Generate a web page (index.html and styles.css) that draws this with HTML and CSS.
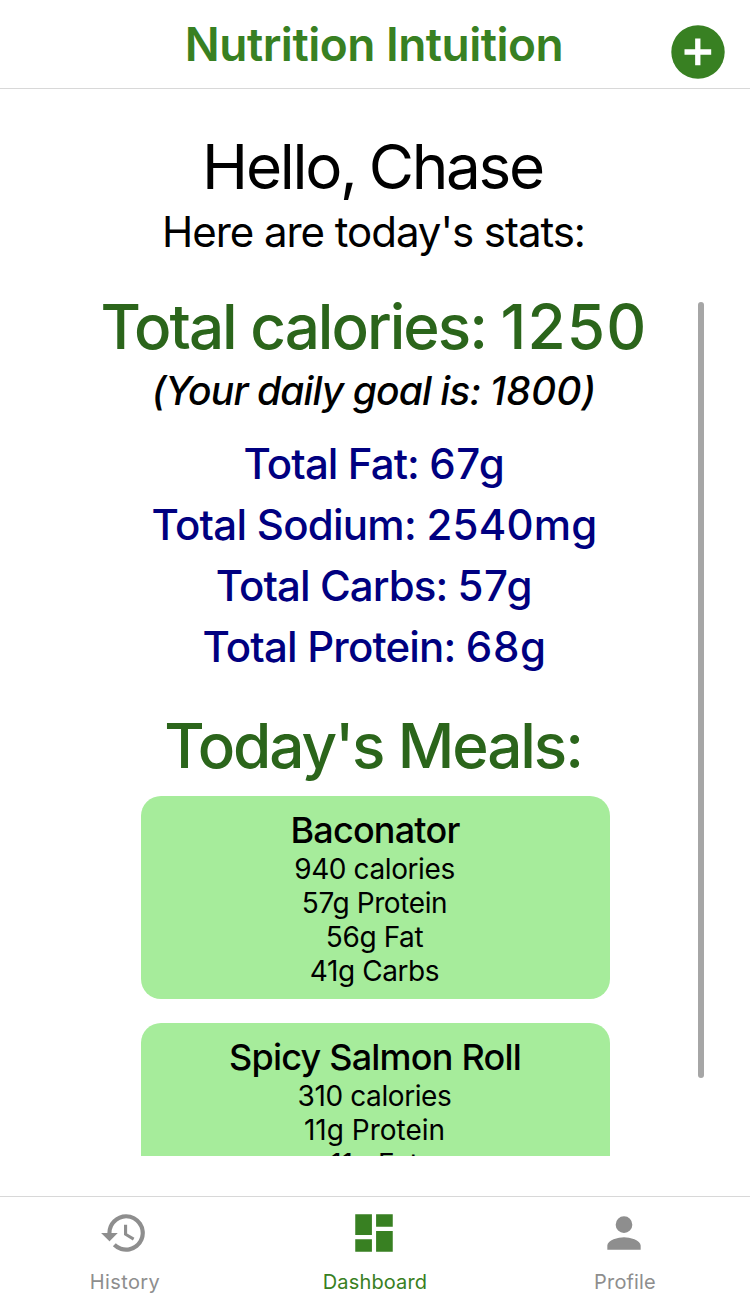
FILE: index.html
```html
<!DOCTYPE html>
<html lang="en">
<head>
<meta charset="utf-8">
<title>Nutrition Intuition</title>
<link rel="stylesheet" href="styles.css">
</head>
<body>
<div class="app">
  <header class="header">
    <h1 class="brand">Nutrition Intuition</h1>
    <button class="add" aria-label="Add meal">
      <svg viewBox="0 0 54 54" width="54" height="54"><circle cx="27" cy="27" r="26.7" fill="#388022"/><path d="M26.800 13.600v26.700M13.500 27h26.700" stroke="#fff" stroke-width="5.300"/></svg>
    </button>
  </header>
  <section class="greeting">
    <h2 class="hello">Hello, Chase</h2>
    <p class="intro">Here are today's stats:</p>
  </section>
  <main class="scroll">
    <div class="content">
      <p class="calories">Total calories: <span class="value">1250</span></p>
      <p class="goal">(Your daily goal is: <span class="value">1800)</span></p>
      <ul class="stats">
        <li class="fat">Total Fat: <span class="value">67g</span></li>
        <li class="sodium">Total Sodium: <span class="value">2540mg</span></li>
        <li class="carbs">Total Carbs: <span class="value">57g</span></li>
        <li class="protein">Total Protein: <span class="value">68g</span></li>
      </ul>
      <h2 class="meals-title">Today's Meals:</h2>
      <article class="meal">
        <h3>Baconator</h3>
        <p>940 calories</p><p>57g Protein</p><p>56g Fat</p><p>41g Carbs</p>
      </article>
      <article class="meal">
        <h3>Spicy Salmon Roll</h3>
        <p>310 calories</p><p class="wide">11g Protein</p><p class="wide">11g Fat</p>
      </article>
    </div>
    <div class="thumb"></div>
  </main>
  <nav class="tabs">
    <a class="tab history"><svg width="50" height="50" viewBox="0 0 24 24"><path d="M13 3a9 9 0 0 0-9 9H1l3.890 3.890.07.14L9 12H6a7 7 0 1 1 2.060 4.940l-1.420 1.420A9 9 0 1 0 13 3zm-1 5v5l4.280 2.540.72-1.210-3.500-2.080V8z"/></svg><span class="label">History</span></a>
    <a class="tab active"><svg width="50" height="50" viewBox="0 0 24 24"><path d="M3 13h8V3H3zm0 8h8v-6H3zm10 0h8V11h-8zm0-18v6h8V3z"/></svg><span class="label">Dashboard</span></a>
    <a class="tab"><svg width="50" height="50" viewBox="0 0 24 24"><path d="M12 12a4 4 0 1 0 0-8 4 4 0 0 0 0 8zm0 2c-2.670 0-8 1.340-8 4v2h16v-2c0-2.660-5.330-4-8-4z"/></svg><span class="label">Profile</span></a>
  </nav>
</div>
</body>
</html>
```
FILE: styles.css
```css
* { box-sizing: border-box; margin: 0; padding: 0; }
body { font-family: Inter, "Liberation Sans", sans-serif; background: #fff; color: #000; }
.app { width: 750px; height: 1294px; display: flex; flex-direction: column; overflow: hidden; text-align: center; white-space: nowrap; }
.header { height: 89px; border-bottom: 1px solid #d8d8d8; display: grid; grid-template-columns: 80px 1fr 80px; }
.brand { grid-column: 2; padding-right: 2px; font-size: 46px; line-height: 89px; font-weight: 600; color: #388022; letter-spacing: -.5px; }
.add { border: 0; background: none; width: 54px; height: 54px; margin: 25px 0 0 1px; }
.add svg { display: block; }
.greeting { height: 201px; padding-top: 41px; }
.hello { font-size: 62px; line-height: 74px; font-weight: 400; letter-spacing: -2.300px; word-spacing: -2px; padding-right: 5px; }
.intro { font-size: 42px; line-height: 52px; letter-spacing: -1.040px; margin-top: 2px; padding-right: 3px; }
.scroll { height: 866px; overflow: hidden; display: grid; grid-template-columns: 52px 1fr 52px; }
.content { grid-column: 2; }
.calories { font-size: 62px; line-height: 74px; font-weight: 500; color: #2b651b; letter-spacing: -2px; padding-right: 2px; }
.calories .value { letter-spacing: 1.200px; }
.goal { font-size: 39px; line-height: 50px; margin-top: 2px; font-style: italic; font-weight: 500; letter-spacing: -.9px; padding-right: 2px; }
.goal .value { letter-spacing: .2px; }
.stats { list-style: none; margin-top: 17px; padding-right: 1px; font-size: 42px; line-height: 61px; font-weight: 500; color: #000080; }
.stats .value { letter-spacing: .6px; }
.fat { letter-spacing: -.9px; }
.sodium { letter-spacing: -.74px; }
.stats .sodium .value { letter-spacing: .2px; }
.carbs { letter-spacing: -.93px; }
.protein { letter-spacing: -.82px; }
.meals-title { font-size: 62px; line-height: 74px; margin-top: 32px; font-weight: 500; color: #2b651b; letter-spacing: -2.100px; padding-right: 4px; }
.meal { width: 469px; height: 203px; margin: 13px auto 24px; padding-top: 12px; border-radius: 20px; background: #a6ec9b; }
.meal h3 { font-size: 36px; line-height: 44px; font-weight: 500; letter-spacing: -.8px; }
.meal p { font-size: 28px; line-height: 34px; letter-spacing: -.4px; padding-right: 1px; }
.meal .wide { letter-spacing: 0; }
.thumb { width: 6px; height: 776px; margin-top: 12px; border-radius: 3px; background: #a6a6a6; }
.tabs { height: 98px; margin-top: 40px; border-top: 1px solid #d8d8d8; display: grid; grid-template-columns: repeat(3, 250px); }
.tab { display: flex; flex-direction: column; align-items: center; gap: 12px; padding: 11px 2px 0 0; color: #8e8e8e; fill: currentColor; font-size: 20px; line-height: 24px; letter-spacing: .15px; }
.label { padding-left: 2px; }
.history { letter-spacing: .4px; }
.active { color: #388022; }
```
